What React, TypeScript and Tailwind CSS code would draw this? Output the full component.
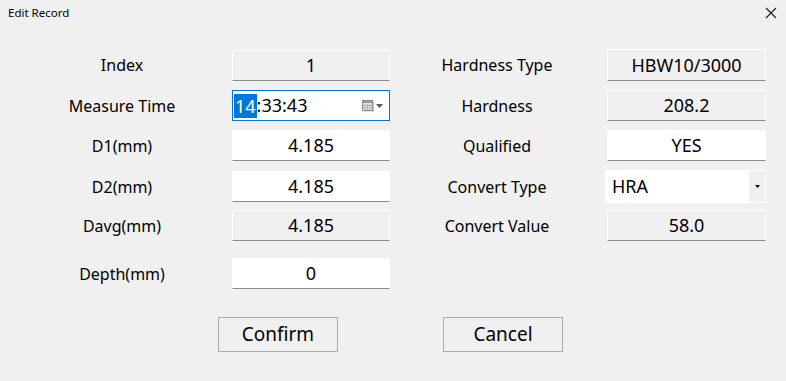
import React from "react";

const font = { fontFamily: '"Noto Sans", "Open Sans", sans-serif' };

function Label({ text, className = "" }: { text: string; className?: string }) {
  return (
    <div className={`w-[160px] text-center text-[16px] text-black ${className}`}>{text}</div>
  );
}

function Field({ value, editable = false, className = "" }: { value: string; editable?: boolean; className?: string }) {
  return (
    <div
      className={`flex h-[31px] w-[158px] items-center justify-center border border-white border-b-[#8a8a8a] text-[18px] text-black ${
        editable ? "bg-white" : "bg-[#f0f0f0]"
      } ${className}`}
    >
      {value}
    </div>
  );
}

function TimeField() {
  return (
    <div className="ml-[30px] flex h-[31px] w-[158px] items-center border border-[#0078d7] bg-white text-[18px] text-black">
      <span className="ml-[1px] bg-[#0078d7] px-[1px] leading-[24px] text-white">14</span>
      <span>:33:43</span>
      <div className="ml-auto mr-[6px] flex items-center gap-[2px]">
        <svg width="12" height="12" viewBox="0 0 12 12">
          <rect x="0.5" y="0.5" width="10" height="10" fill="#e6e6e6" stroke="#8c8c8c" />
          <rect x="1" y="1" width="9" height="2" fill="#9a9a9a" />
          <path d="M3 4v6M5.5 4v6M8 4v6M1 5.5h9M1 8h9" stroke="#b5b5b5" strokeWidth="1" />
          <path d="M11.5 2v10H2" stroke="#c8c8c8" fill="none" />
        </svg>
        <svg width="7" height="4" viewBox="0 0 7 4">
          <path d="M0 0h7L3.5 4z" fill="#4a5d7a" />
        </svg>
      </div>
    </div>
  );
}

function ComboField() {
  return (
    <div className="ml-[28px] flex h-[33px] w-[161px] items-stretch border border-white bg-white text-[18px] text-black">
      <div className="flex flex-1 items-center pl-[6px]">HRA</div>
      <div className="flex w-[16px] items-center justify-center bg-[#f0f0f0]">
        <svg width="5" height="3" viewBox="0 0 5 3">
          <path d="M0 0h5L2.5 3z" fill="#000" />
        </svg>
      </div>
    </div>
  );
}

export default function App() {
  return (
    <div className="h-[381px] w-[786px] overflow-hidden bg-[#f0f0f0]" style={font}>
      <div className="flex h-[26px] items-center justify-between bg-[#f0f0f0] pl-[8px] pr-[9px]">
        <span className="text-[11.5px] text-black">Edit Record</span>
        <svg width="12" height="12" viewBox="0 0 12 12">
          <path d="M1 1l10 10M11 1L1 11" stroke="#1a1a1a" strokeWidth="1.1" />
        </svg>
      </div>

      <div className="flex flex-col gap-[9px] pl-[42px] pt-[23px]">
        <div className="flex items-center">
          <Label text="Index" />
          <Field value="1" className="ml-[30px]" />
          <Label text="Hardness Type" className="ml-[27px]" />
          <Field value="HBW10/3000" className="ml-[30px] h-[32px] w-[159px]" />
        </div>
        <div className="flex items-center">
          <Label text="Measure Time" />
          <TimeField />
          <Label text="Hardness" className="ml-[27px]" />
          <Field value="208.2" className="ml-[30px] w-[159px]" />
        </div>
        <div className="flex items-center">
          <Label text="D1(mm)" />
          <Field value="4.185" editable className="ml-[30px]" />
          <Label text="Qualified" className="ml-[27px]" />
          <Field value="YES" editable className="ml-[30px] w-[159px]" />
        </div>
        <div className="flex items-center">
          <Label text="D2(mm)" />
          <Field value="4.185" editable className="ml-[30px]" />
          <Label text="Convert Type" className="ml-[27px]" />
          <ComboField />
        </div>
        <div className="-mt-[2px] flex items-center">
          <Label text="Davg(mm)" />
          <Field value="4.185" className="ml-[30px]" />
          <Label text="Convert Value" className="ml-[27px]" />
          <Field value="58.0" className="ml-[30px] w-[159px]" />
        </div>
        <div className="mt-[8px] flex items-center">
          <Label text="Depth(mm)" />
          <Field value="0" editable className="ml-[30px]" />
        </div>
      </div>

      <div className="mt-[28px] flex pl-[218px]">
        <button className="h-[35px] w-[120px] border border-[#adadad] bg-[#f0f0f0] text-[19px] text-black">
          Confirm
        </button>
        <button className="ml-[105px] h-[35px] w-[120px] border border-[#adadad] bg-[#f0f0f0] text-[19px] text-black">
          Cancel
        </button>
      </div>
    </div>
  );
}
